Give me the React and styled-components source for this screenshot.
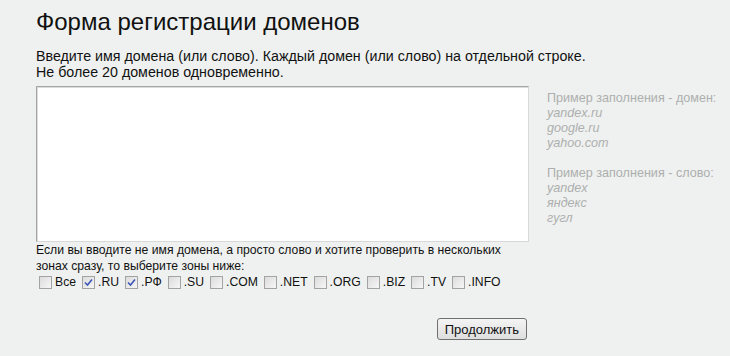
import styled, { createGlobalStyle } from "styled-components";

const GlobalStyle = createGlobalStyle`
  body {
    margin: 0;
    background: #eff1f0;
    font-family: "Liberation Sans", Arial, sans-serif;
    color: #111;
  }
`;

const Page = styled.div`
  padding: 8px 0 0 36px;
  width: 694px;
`;

const Title = styled.h1`
  margin: 0;
  font-size: 24px;
  font-weight: normal;
  line-height: 28px;
  color: #111;
`;

const Intro = styled.p`
  margin: 12px 0 6px;
  font-size: 14.25px;
  line-height: 16px;
`;

const Row = styled.div`
  display: flex;
  gap: 18px;
  align-items: flex-start;
`;

const FieldColumn = styled.div`
  width: 493px;
`;

const Area = styled.textarea`
  box-sizing: border-box;
  display: block;
  width: 493px;
  height: 156px;
  margin: 0;
  resize: none;
  background: #fff;
  border: 1px solid #a5a5a5;
  border-right-color: #d8d8d8;
  border-bottom-color: #d8d8d8;
  box-shadow: inset 1px 1px 0 #dcdcdc;
  outline: none;
  font-family: inherit;
`;

const Hint = styled.div`
  padding-top: 5px;
  font-size: 12.6px;
  line-height: 15px;
  color: #adafae;
`;

const HintBlock = styled.div`
  margin-bottom: 15px;
`;

const Example = styled.div`
  font-style: italic;
`;

const Note = styled.p`
  margin: 0;
  font-size: 12.2px;
  line-height: 16px;
`;

const Zones = styled.div`
  display: flex;
  align-items: center;
  padding-left: 3px;
  margin-top: 1px;
  font-size: 12.2px;
`;

const Zone = styled.label`
  display: flex;
  align-items: center;
  gap: 3px;
  margin-right: 6px;
`;

const Box = styled.span`
  box-sizing: border-box;
  width: 13px;
  height: 13px;
  border: 1px solid #a3a3a3;
  background: linear-gradient(135deg, #dcdcdc 0%, #f6f6f6 100%);
  display: flex;
  align-items: center;
  justify-content: center;
`;

const Actions = styled.div`
  display: flex;
  justify-content: flex-end;
  width: 491px;
  margin-top: 29px;
`;

const Button = styled.button`
  height: 22px;
  padding: 0 7px;
  border: 1px solid #707070;
  border-radius: 3px;
  background: linear-gradient(#f4f4f4, #dedede);
  font-family: inherit;
  font-size: 13px;
  color: #111;
`;

const zones = [
  ["Все", false],
  [".RU", true],
  [".РФ", true],
  [".SU", false],
  [".COM", false],
  [".NET", false],
  [".ORG", false],
  [".BIZ", false],
  [".TV", false],
  [".INFO", false],
];

function Check({ checked }) {
  return (
    <Box>
      {checked && (
        <svg width="9" height="9" viewBox="0 0 9 9">
          <path d="M1 4.5 L3.5 7 L8 1.5" fill="none" stroke="#3b56b8" strokeWidth="1.6" />
        </svg>
      )}
    </Box>
  );
}

export default function App() {
  return (
    <>
      <GlobalStyle />
      <Page>
        <Title>Форма регистрации доменов</Title>
        <Intro>
          Введите имя домена (или слово). Каждый домен (или слово) на отдельной строке.
          <br />
          Не более 20 доменов одновременно.
        </Intro>
        <Row>
          <FieldColumn>
            <Area />
            <Note>
              Если вы вводите не имя домена, а просто слово и хотите проверить в нескольких
              <br />
              зонах сразу, то выберите зоны ниже:
            </Note>
            <Zones>
              {zones.map(([name, checked]) => (
                <Zone key={name}>
                  <Check checked={checked} />
                  {name}
                </Zone>
              ))}
            </Zones>
          </FieldColumn>
          <Hint>
            <HintBlock>
              Пример заполнения - домен:
              <Example>yandex.ru</Example>
              <Example>google.ru</Example>
              <Example>yahoo.com</Example>
            </HintBlock>
            <HintBlock>
              Пример заполнения - слово:
              <Example>yandex</Example>
              <Example>яндекс</Example>
              <Example>гугл</Example>
            </HintBlock>
          </Hint>
        </Row>
        <Actions>
          <Button>Продолжить</Button>
        </Actions>
      </Page>
    </>
  );
}
